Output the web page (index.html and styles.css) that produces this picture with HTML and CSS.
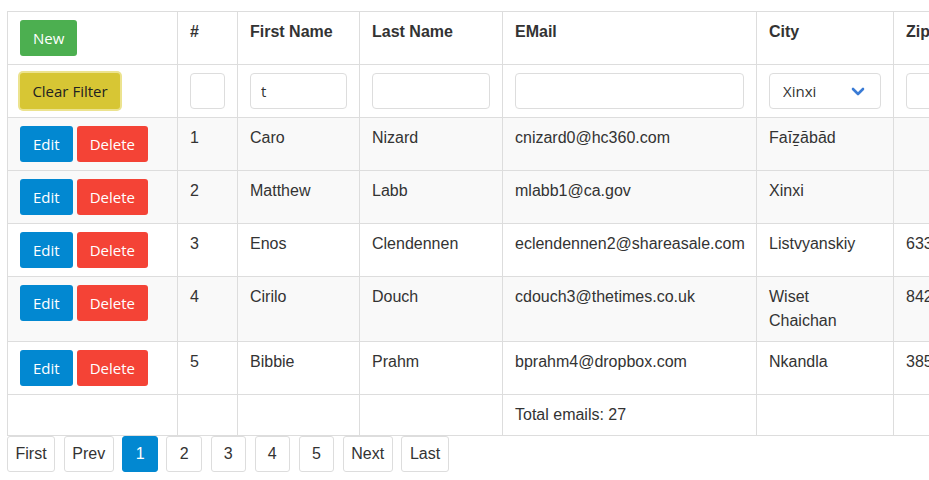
FILE: index.html
```html
<!DOCTYPE html>
<html lang="en">
<head>
<meta charset="utf-8">
<title>Grid</title>
<link rel="stylesheet" href="styles.css">
</head>
<body>
<div class="page">
  <table class="grid">
    <colgroup>
      <col class="c-actions">
      <col class="c-id">
      <col class="c-first">
      <col class="c-last">
      <col class="c-email">
      <col class="c-city">
      <col class="c-zip">
    </colgroup>
    <thead>
      <tr class="head-row">
        <th><button class="btn btn-new">New</button></th>
        <th>#</th>
        <th>First Name</th>
        <th>Last Name</th>
        <th>EMail</th>
        <th>City</th>
        <th>Zip</th>
      </tr>
      <tr class="filter-row">
        <th><button class="btn btn-clear">Clear Filter</button></th>
        <th><input class="field" type="text"></th>
        <th><input class="field" type="text" value="t"></th>
        <th><input class="field" type="text"></th>
        <th><input class="field" type="text"></th>
        <th>
          <div class="select-wrap">
            <select class="field select"><option>Xinxi</option></select>
            <svg class="chevron" viewBox="0 0 14 9" width="14" height="9"><path d="M2 2 L7 7 L12 2" fill="none" stroke="#3a7bd5" stroke-width="2.6" stroke-linecap="round" stroke-linejoin="round"/></svg>
          </div>
        </th>
        <th><input class="field" type="text"></th>
      </tr>
    </thead>
    <tbody>
      <tr class="shade">
        <td><div class="actions"><button class="btn btn-edit">Edit</button><button class="btn btn-delete">Delete</button></div></td>
        <td>1</td><td>Caro</td><td>Nizard</td><td>cnizard0@hc360.com</td><td>Faīẕābād</td><td></td>
      </tr>
      <tr class="shade">
        <td><div class="actions"><button class="btn btn-edit">Edit</button><button class="btn btn-delete">Delete</button></div></td>
        <td>2</td><td>Matthew</td><td>Labb</td><td>mlabb1@ca.gov</td><td>Xinxi</td><td></td>
      </tr>
      <tr>
        <td><div class="actions"><button class="btn btn-edit">Edit</button><button class="btn btn-delete">Delete</button></div></td>
        <td>3</td><td>Enos</td><td>Clendennen</td><td>eclendennen2@shareasale.com</td><td>Listvyanskiy</td><td>633327</td>
      </tr>
      <tr class="shade">
        <td><div class="actions"><button class="btn btn-edit">Edit</button><button class="btn btn-delete">Delete</button></div></td>
        <td>4</td><td>Cirilo</td><td>Douch</td><td>cdouch3@thetimes.co.uk</td><td>Wiset Chaichan</td><td>84280</td>
      </tr>
      <tr>
        <td><div class="actions"><button class="btn btn-edit">Edit</button><button class="btn btn-delete">Delete</button></div></td>
        <td>5</td><td>Bibbie</td><td>Prahm</td><td>bprahm4@dropbox.com</td><td>Nkandla</td><td>3859</td>
      </tr>
    </tbody>
    <tfoot>
      <tr>
        <td></td><td></td><td></td><td></td><td>Total emails: 27</td><td></td><td></td>
      </tr>
    </tfoot>
  </table>
  <nav class="pager">
    <button class="pg">First</button>
    <button class="pg">Prev</button>
    <button class="pg active">1</button>
    <button class="pg">2</button>
    <button class="pg">3</button>
    <button class="pg">4</button>
    <button class="pg">5</button>
    <button class="pg">Next</button>
    <button class="pg">Last</button>
  </nav>
</div>
</body>
</html>
```

FILE: styles.css
```css
html, body {
  margin: 0;
  padding: 0;
  background: #fff;
}

body {
  font-family: "Liberation Sans", Arial, sans-serif;
  font-size: 16px;
  line-height: 24px;
  color: #333;
}

.page {
  padding: 11px 0 0 7px;
  overflow: hidden;
}

.grid {
  border-collapse: separate;
  border-spacing: 0;
  table-layout: fixed;
  width: 1047px;
  border-top: 1px solid #ddd;
  border-left: 1px solid #ddd;
  background: #fff;
}

.c-actions { width: 170px; }
.c-id { width: 60px; }
.c-first { width: 122px; }
.c-last { width: 143px; }
.c-email { width: 254px; }
.c-city { width: 137px; }
.c-zip { width: 160px; }

.grid th,
.grid td {
  box-sizing: border-box;
  padding: 8px 12px;
  border-right: 1px solid #ddd;
  border-bottom: 1px solid #ddd;
  vertical-align: top;
  text-align: left;
  font-size: 16px;
  line-height: 24px;
}

.grid th {
  font-weight: bold;
}

.filter-row th {
  font-weight: normal;
}

.grid tr.shade td {
  background: #f9f9f9;
}

.btn {
  display: inline-block;
  box-sizing: border-box;
  height: 36px;
  margin: 0;
  padding: 0 13px;
  border: 0;
  border-radius: 3px;
  font-family: "Open Sans", "Noto Sans", sans-serif;
  font-size: 15px;
  line-height: 36px;
  color: #fff;
  vertical-align: top;
  cursor: pointer;
}

.btn-new { background: #4caf50; }
.btn-edit { background: #0288d1; }
.btn-delete { background: #f44336; }

.btn-clear {
  background: #d7c634;
  color: #222;
  box-shadow: 0 0 0 2px #ece38f;
  padding: 0 12px;
  width: 100px;
}

.actions {
  display: flex;
  gap: 4px;
}

.field {
  display: block;
  box-sizing: border-box;
  width: 100%;
  height: 36px;
  margin: 0;
  padding: 0 10px;
  border: 1px solid #ddd;
  border-radius: 4px;
  background: #fff;
  font-family: "Open Sans", "Noto Sans", sans-serif;
  font-size: 15px;
  color: #333;
  outline: none;
}

.select-wrap {
  position: relative;
}

.select {
  appearance: none;
  -webkit-appearance: none;
  padding-left: 13px;
}

.chevron {
  position: absolute;
  right: 16px;
  top: 14px;
  pointer-events: none;
}

.pager {
  display: flex;
  gap: 8.7px;
}

.pg {
  box-sizing: border-box;
  height: 36px;
  min-width: 35.4px;
  margin: 0;
  padding: 0 7.5px;
  border: 1px solid #ddd;
  border-radius: 3px;
  background: #fff;
  font-family: "Liberation Sans", Arial, sans-serif;
  font-size: 16px;
  color: #333;
  line-height: 34px;
}

.pg.active {
  background: #0288d1;
  border-color: #0288d1;
  color: #fff;
}
```
